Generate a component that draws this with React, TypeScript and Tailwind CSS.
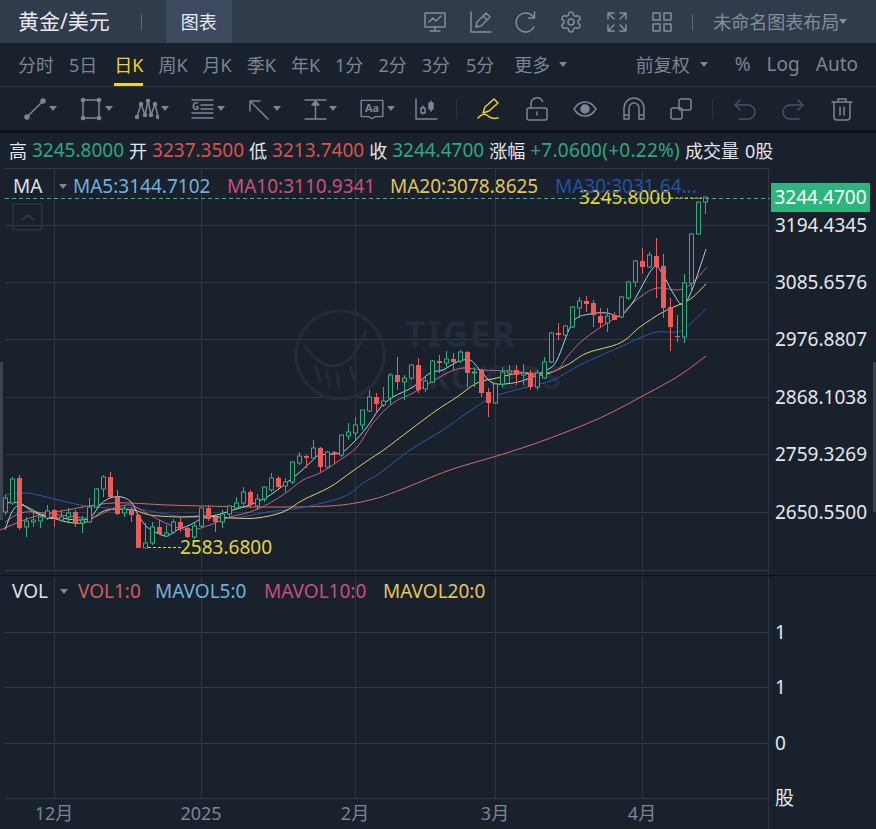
import { Settings } from "lucide-react";
import type { ReactNode } from "react";

// top, bottom, wickTop, wickBottom, direction. one row per day, 7px apart, starts at x=5
type Candle = [number, number, number, number, "u" | "d"];
const candles: Candle[] = [
  [498, 512, 495, 515, "u"], [479, 503, 477, 505, "u"], [478, 528, 475, 530, "d"], [521, 527, 517, 537, "u"],
  [520, 522, 510, 527, "u"], [517, 521, 513, 528, "u"], [511, 518, 505, 520, "u"], [510, 518, 509, 527, "d"],
  [517, 520, 510, 522, "u"], [513, 517, 508, 522, "u"], [512, 523, 510, 527, "d"], [520, 523, 516, 533, "u"],
  [507, 522, 498, 523, "u"], [489, 507, 488, 508, "u"], [477, 489, 475, 497, "u"], [477, 497, 472, 498, "d"],
  [497, 514, 490, 515, "d"], [509, 513, 506, 517, "u"], [509, 515, 507, 522, "d"], [515, 548, 514, 548, "d"],
  [543, 548, 523, 548, "u"], [527, 543, 522, 545, "u"], [527, 534, 520, 535, "d"], [533, 536, 525, 537, "u"],
  [522, 532, 519, 534, "u"], [522, 529, 518, 532, "d"], [528, 537, 527, 538, "d"], [526, 537, 523, 539, "u"],
  [508, 526, 507, 527, "u"], [508, 519, 505, 521, "d"], [517, 522, 514, 532, "d"], [514, 522, 510, 528, "u"],
  [506, 514, 505, 517, "u"], [503, 508, 497, 510, "u"], [492, 503, 487, 507, "u"], [492, 505, 490, 508, "d"],
  [499, 506, 494, 510, "u"], [487, 499, 486, 502, "u"], [478, 490, 473, 492, "u"], [478, 487, 476, 490, "d"],
  [482, 486, 478, 492, "u"], [462, 482, 461, 484, "u"], [456, 463, 452, 465, "u"], [456, 458, 455, 468, "d"],
  [448, 458, 440, 460, "u"], [448, 467, 447, 472, "d"], [452, 467, 451, 467, "u"], [452, 454, 451, 464, "d"],
  [435, 455, 435, 457, "u"], [432, 436, 423, 440, "u"], [425, 433, 417, 440, "u"], [410, 425, 410, 430, "u"],
  [397, 411, 390, 412, "u"], [397, 404, 393, 413, "d"], [401, 405, 387, 407, "u"], [375, 398, 373, 405, "u"],
  [375, 382, 357, 390, "d"], [378, 382, 375, 400, "u"], [365, 378, 364, 380, "u"], [365, 390, 358, 393, "d"],
  [381, 389, 377, 392, "u"], [361, 382, 360, 383, "u"], [361, 363, 355, 373, "d"], [359, 363, 351, 367, "u"],
  [359, 362, 353, 370, "d"], [352, 361, 350, 363, "u"], [352, 373, 351, 387, "d"], [372, 373, 367, 387, "u"],
  [370, 393, 369, 397, "d"], [392, 403, 388, 417, "d"], [384, 403, 383, 404, "u"], [372, 384, 367, 388, "u"],
  [371, 373, 365, 383, "u"], [370, 375, 365, 385, "d"], [373, 375, 364, 385, "u"], [373, 387, 370, 390, "d"],
  [373, 387, 370, 390, "u"], [362, 378, 357, 379, "u"], [333, 362, 332, 363, "u"], [333, 335, 323, 340, "d"],
  [326, 335, 325, 336, "u"], [307, 327, 306, 328, "u"], [301, 308, 297, 318, "u"], [301, 304, 296, 312, "d"],
  [303, 315, 300, 327, "d"], [316, 323, 308, 328, "d"], [316, 323, 308, 332, "u"], [315, 320, 312, 320, "d"],
  [297, 317, 296, 318, "u"], [282, 298, 281, 300, "u"], [261, 282, 260, 287, "u"], [261, 267, 248, 274, "d"],
  [255, 267, 252, 268, "u"], [256, 267, 238, 298, "d"], [266, 308, 254, 318, "d"], [307, 327, 298, 351, "d"],
  [336, 337, 315, 342, "d"], [283, 337, 274, 343, "u"], [234, 283, 233, 290, "u"], [202, 234, 201, 235, "u"],
  [197, 202, 197, 214, "u"],
];

const ma5: number[][] = [[5,530],[12,512],[20,505],[33,510],[47,518],[60,518],[77,520],[90,518],[100,505],[110,498],[122,497],[132,503],[138,515],[147,527],[157,533],[167,536],[177,530],[190,525],[203,518],[217,515],[233,510],[250,505],[267,497],[280,488],[290,480],[300,472],[313,460],[320,455],[340,453],[353,443],[367,427],[380,408],[393,397],[413,387],[430,373],[443,370],[457,362],[470,360],[480,370],[493,383],[513,383],[530,378],[547,370],[557,360],[573,322],[590,314],[607,313],[620,316],[633,302],[653,268],[662,273],[673,293],[683,305],[692,290],[700,267],[706,249]];
const ma10: number[][] = [[5,522],[25,512],[60,515],[90,518],[110,510],[130,505],[150,515],[170,525],[190,530],[210,525],[230,517],[250,512],[270,503],[287,492],[303,480],[320,473],[337,462],[357,447],[373,423],[393,403],[413,393],[430,383],[447,373],[463,368],[483,370],[507,371],[537,373],[557,370],[567,357],[583,340],[607,323],[620,315],[640,297],[657,288],[677,290],[690,285],[707,267]];
const ma20: number[][] = [[5,503],[20,503],[33,512],[50,517],[67,522],[83,523],[93,518],[107,510],[133,510],[150,515],[180,517],[205,516],[233,518],[257,518],[283,512],[303,500],[330,487],[350,473],[367,461],[385,449],[410,430],[437,410],[457,397],[477,383],[497,378],[520,373],[543,375],[567,365],[587,353],[620,343],[640,327],[663,312],[683,303],[693,297],[706,284]];
const ma30: number[][] = [[5,495],[27,493],[50,498],[80,505],[107,508],[133,508],[160,513],[187,517],[233,518],[267,512],[300,508],[343,497],[363,483],[380,473],[410,450],[443,430],[467,413],[493,397],[527,387],[553,380],[580,365],[620,347],[640,338],[657,332],[677,332],[687,327],[706,309]];
const ma60: number[][] = [[0,530],[33,517],[67,510],[113,503],[167,505],[203,506],[260,507],[330,506],[370,500],[400,490],[450,470],[500,455],[545,440],[600,418],[650,392],[680,375],[706,356]];

const FONT = "font-['Noto_Sans','Noto_Sans_CJK_SC',sans-serif]";

function smooth(pts: number[][]) {
  let d = `M${pts[0][0]} ${pts[0][1]}`;
  for (let i = 0; i < pts.length - 1; i++) {
    const p0 = pts[i - 1] || pts[i];
    const p1 = pts[i];
    const p2 = pts[i + 1];
    const p3 = pts[i + 2] || p2;
    const c1x = p1[0] + (p2[0] - p0[0]) / 6;
    const c1y = p1[1] + (p2[1] - p0[1]) / 6;
    const c2x = p2[0] - (p3[0] - p1[0]) / 6;
    const c2y = p2[1] - (p3[1] - p1[1]) / 6;
    d += ` C${c1x} ${c1y} ${c2x} ${c2y} ${p2[0]} ${p2[1]}`;
  }
  return d;
}

function Caret({ className = "border-t-[#7c8592]" }: { className?: string }) {
  return <span className={`inline-block h-0 w-0 border-x-[4px] border-t-[5px] border-x-transparent ${className}`} />;
}

function Icon({ children, size = 24 }: { children: ReactNode; size?: number }) {
  return (
    <svg width={size} height={size} viewBox="0 0 24 24" fill="none" stroke="currentColor" strokeWidth="1.5" strokeLinecap="round" strokeLinejoin="round">
      {children}
    </svg>
  );
}

function ToolBtn({ children }: { children: ReactNode }) {
  return (
    <div className="flex w-14 items-center gap-[2px] text-[#7c8592]">
      {children}
      <Caret />
    </div>
  );
}

function Tab({ label, active, className = "" }: { label: string; active?: boolean; className?: string }) {
  return (
    <div className={`relative flex h-full items-center ${active ? "text-[#f2d428]" : "text-[#7c8592]"} ${className}`}>
      {label}
      {active && <span className="absolute bottom-0 left-0 h-[3px] w-full bg-[#f2d428]" />}
    </div>
  );
}

function Quote({ label, value, color }: { label: string; value: string; color: string }) {
  return (
    <>
      <span className="text-[#e4e7eb]">{label}</span>
      <span className={`text-[19px] ${color}`}>{value}</span>
    </>
  );
}

const gridX = [54, 201, 355, 495, 642];

function MainChart() {
  const mainY = [168.5, 225.5, 282.5, 339.5, 397.5, 454.5, 512.5, 570.5];
  const labels: [string, number][] = [["3194.4345", 225], ["3085.6576", 282], ["2976.8807", 339.5], ["2868.1038", 397], ["2759.3269", 454], ["2650.5500", 512]];
  return (
    <svg className="block" width="876" height="407" viewBox="0 168 876 407">
      {mainY.map((y) => <line key={y} x1="5" x2="769" y1={y} y2={y} stroke="#333b47" />)}
      {gridX.map((x) => <line key={x} x1={x + 0.5} x2={x + 0.5} y1="168" y2="575" stroke="#2d3541" />)}
      <line x1="768.5" x2="768.5" y1="168" y2="575" stroke="#2d3541" />

      <g stroke="#232c38" fill="none">
        <circle cx="340" cy="355" r="44" strokeWidth="3" />
        <path d="M304 345 C325 375 350 375 366 330" strokeWidth="3" />
        <path d="M315 365 l6 18 M326 370 l4 18 M337 372 l2 18 M350 366 l4 14" strokeWidth="3" />
      </g>
      <text x="405" y="347" fontSize="35" fontWeight="700" fill="#232c38" letterSpacing="2">TIGER</text>
      <text x="405" y="389" fontSize="33" fontWeight="700" fill="#232c38" letterSpacing="1">BROKERS</text>

      <path d={smooth(ma60)} fill="none" stroke="#d96a68" strokeWidth="1" />
      <path d={smooth(ma30)} fill="none" stroke="#2b58a8" strokeWidth="1" />
      <path d={smooth(ma20)} fill="none" stroke="#ddd070" strokeWidth="1" />
      <path d={smooth(ma10)} fill="none" stroke="#c25f88" strokeWidth="1" />
      <path d={smooth(ma5)} fill="none" stroke="#9fd6e6" strokeWidth="1" />

      {candles.map(([top, bottom, wt, wb, dir], i) => {
        const cx = 5 + i * 7 + 0.5;
        if (dir === "d") {
          return (
            <g key={i}>
              <line x1={cx} x2={cx} y1={wt} y2={wb} stroke="#ef5b5b" />
              <rect x={cx - 2.5} y={top} width="5" height={bottom - top} fill="#ef5b5b" />
            </g>
          );
        }
        return (
          <g key={i} stroke="#33ad80" fill="none">
            <line x1={cx} x2={cx} y1={wt} y2={top} />
            <line x1={cx} x2={cx} y1={bottom} y2={wb} />
            <rect x={cx - 2} y={top} width="4" height={bottom - top} fill="#19212c" />
          </g>
        );
      })}

      <line x1="5" x2="770" y1="198.5" y2="198.5" stroke="#2fb98a" strokeDasharray="4 3" />
      <line x1="670" x2="702" y1="198" y2="198" stroke="#e3d53b" strokeDasharray="3 2" />
      <text x="579" y="204" fontSize="19" fill="#e3d53b">3245.8000</text>
      <line x1="148" x2="181" y1="547.5" y2="547.5" stroke="#e3d53b" strokeDasharray="3 2" />
      <text x="180" y="554" fontSize="19" fill="#e3d53b">2583.6800</text>

      {labels.map(([t, y]) => (
        <text key={t} x="775" y={y + 6.5} fontSize="19" fill="#e4e7eb">{t}</text>
      ))}
    </svg>
  );
}

function VolChart() {
  const ys = [631.5, 686.5, 742.5, 797.5];
  const ax: [string, number][] = [["1", 631], ["1", 686], ["0", 742], ["股", 797]];
  const months: [string, number][] = [["12月", 54], ["2025", 201], ["2月", 355], ["3月", 495], ["4月", 642]];
  return (
    <svg className="block" width="876" height="254" viewBox="0 575 876 254">
      {ys.map((y) => <line key={y} x1="5" x2="769" y1={y} y2={y} stroke="#333b47" />)}
      {gridX.map((x) => <line key={x} x1={x + 0.5} x2={x + 0.5} y1="576" y2="797" stroke="#2d3541" />)}
      <line x1="768.5" x2="768.5" y1="576" y2="829" stroke="#2d3541" />
      {ax.map(([t, y]) => (
        <text key={y} x="775" y={y + 6.5} fontSize="19" fill="#e4e7eb">{t}</text>
      ))}
      {months.map(([t, x]) => (
        <text key={t} x={x} y="819" fontSize="18" fill="#7c8592" textAnchor="middle">{t}</text>
      ))}
    </svg>
  );
}

export default function App() {
  return (
    <div className={`h-[829px] w-full overflow-hidden bg-[#19212c] text-[18px] leading-none ${FONT}`}>
      <header className="flex h-[43px] items-center bg-[#303b4c] pl-[18px] pr-[26px] text-[#838d9b]">
        <span className="text-[21px] text-[#e8eaee]">黄金/美元</span>
        <span className="ml-[31px] h-[16px] w-px bg-[#5d6777]" />
        <div className="ml-[24px] flex h-full w-[66px] items-center justify-center bg-[#3c495e] text-[#e8eaee]">图表</div>
        <div className="ml-[191px] flex items-center gap-[21.5px]">
          <Icon>
            <path d="M2 3h20v14H2z" />
            <path d="M6 12l4-4 3 3 5-5M12 17v4M7 21h10" />
          </Icon>
          <Icon>
            <path d="M3 2v20h20" />
            <path d="M8 17l1-5 9-9 4 4-9 9zM15 6l4 4" />
          </Icon>
          <Icon>
            <path d="M19.5 7A9.5 9.5 0 1 0 20 17" />
            <path d="M20.5 2v6h-6" />
          </Icon>
          <Settings size={24} strokeWidth={1.5} />
          <Icon>
            <path d="M3 9V3h6M3 3l6 6M15 3h6v6M21 3l-6 6M3 15v6h6M3 21l6-6M21 15v6h-6M21 21l-6-6" />
          </Icon>
          <Icon>
            <path d="M3 3h7v7H3zM14 3h7v7h-7zM3 14h7v7H3zM14 14h7v7h-7z" />
          </Icon>
        </div>
        <span className="ml-[18px] h-[16px] w-px bg-[#5d6777]" />
        <span className="ml-[20px] flex items-center whitespace-nowrap">未命名图表布局<Caret className="border-t-[#838d9b]" /></span>
      </header>

      <div className="flex h-[44px] items-center border-b border-[#2f3843] pl-[18px] pr-[18px]">
        <div className="flex h-full items-center gap-[15px]">
          <Tab label="分时" />
          <Tab label="5日" />
          <Tab label="日K" active className="ml-[2px]" />
          <Tab label="周K" />
          <Tab label="月K" />
          <Tab label="季K" />
          <Tab label="年K" />
          <Tab label="1分" />
          <Tab label="2分" />
          <Tab label="3分" />
          <Tab label="5分" className="ml-[1px]" />
          <span className="ml-[5px] flex items-center gap-[9px] text-[#7c8592]">更多<Caret /></span>
        </div>
        <div className="ml-auto flex items-center text-[19px] text-[#7c8592]">
          <span className="text-[18px]">前复权</span>
          <span className="ml-[10px] flex"><Caret /></span>
          <span className="ml-[27px]">%</span>
          <span className="ml-[16px]">Log</span>
          <span className="ml-[16px]">Auto</span>
        </div>
      </div>

      <div className="flex h-[46px] items-center border-b-[3px] border-[#0e131a] pl-[23px] text-[#7c8592]">
        <ToolBtn>
          <Icon>
            <path d="M4 20L20 4" />
            <circle cx="4" cy="20" r="2" fill="currentColor" />
            <circle cx="20" cy="4" r="2" fill="currentColor" />
          </Icon>
        </ToolBtn>
        <ToolBtn>
          <Icon>
            <path d="M4 3h16v18H4z" />
            <g fill="currentColor">
              <circle cx="4" cy="3" r="1.6" /><circle cx="20" cy="3" r="1.6" /><circle cx="4" cy="21" r="1.6" /><circle cx="20" cy="21" r="1.6" />
            </g>
          </Icon>
        </ToolBtn>
        <ToolBtn>
          <Icon>
            <path d="M2 20L6 7l4 11 3-14 3 14 4-11 3 13" />
            <g fill="currentColor">
              <circle cx="2" cy="20" r="1.5" /><circle cx="6" cy="7" r="1.5" /><circle cx="10" cy="18" r="1.5" /><circle cx="13" cy="4" r="1.5" /><circle cx="16" cy="18" r="1.5" /><circle cx="20" cy="7" r="1.5" /><circle cx="23" cy="20" r="1.5" />
            </g>
          </Icon>
        </ToolBtn>
        <ToolBtn>
          <Icon>
            <path d="M1 3h21M10 8h12M10 12h12M1 16h21M1 21h21" />
            <text x="1" y="13" fontSize="10" fontWeight="700" fill="currentColor" stroke="none">G</text>
          </Icon>
        </ToolBtn>
        <ToolBtn>
          <Icon>
            <path d="M21 22L3 4M3 14V4h10" />
          </Icon>
        </ToolBtn>
        <ToolBtn>
          <Icon>
            <path d="M2 3h21M2 22h21M12.5 8v14" />
            <path d="M9 8l3.5-4 3.5 4z" fill="currentColor" />
          </Icon>
        </ToolBtn>
        <ToolBtn>
          <Icon size={26}>
            <path d="M2 4h20v15h-7l-3 2-3-2H2z" strokeWidth="1.3" />
            <text x="12" y="15" fontSize="10" fontWeight="700" fill="currentColor" stroke="none" textAnchor="middle">Aa</text>
          </Icon>
        </ToolBtn>
        <div className="-ml-[1px] text-[#7c8592]">
          <Icon>
            <path d="M2 2v20h21" />
            <path d="M9 9v8M17 4v10" />
            <rect x="7" y="11" width="4" height="5" fill="#19212c" />
            <rect x="15" y="6" width="4" height="6" fill="currentColor" />
          </Icon>
        </div>
        <span className="ml-[18px] h-[20px] w-px bg-[#2b333e]" />
        <div className="ml-[20px] flex w-[48px] text-[#e9d22a]">
          <Icon>
            <path d="M6 16l2-6L17 2l4 4-9 8z" />
            <path d="M1 21c4-5 8-4 10-2s5 3 10 2" />
          </Icon>
        </div>
        <div className="flex w-[48px]">
          <Icon>
            <rect x="2" y="11" width="20" height="12" rx="2" />
            <path d="M6 11V7a6 6 0 0 1 11.5-2.5M12 15v3" />
          </Icon>
        </div>
        <div className="flex w-[49px]">
          <Icon>
            <path d="M1 12c3-5 7-7 11-7s8 2 11 7c-3 5-7 7-11 7s-8-2-11-7z" />
            <circle cx="12" cy="12" r="4" fill="currentColor" />
          </Icon>
        </div>
        <div className="flex w-[47px]">
          <Icon>
            <path d="M2 22V11a10 10 0 0 1 20 0v11h-5V11a5 5 0 0 0-10 0v11zM2 18h5M17 18h5" />
          </Icon>
        </div>
        <div className="flex w-[43px]">
          <Icon>
            <rect x="10" y="2" width="12" height="11" rx="2" />
            <rect x="2" y="11" width="11" height="11" rx="2" />
          </Icon>
        </div>
        <span className="h-[20px] w-px bg-[#2b333e]" />
        <div className="ml-[20px] flex w-[48px] text-[#485160]">
          <Icon>
            <path d="M7 3L2 8l5 5" />
            <path d="M2 8h13a7 7 0 0 1 0 14H6" />
          </Icon>
        </div>
        <div className="flex w-[49px] text-[#485160]">
          <Icon>
            <path d="M17 3l5 5-5 5" />
            <path d="M22 8H9a7 7 0 0 0 0 14h9" />
          </Icon>
        </div>
        <div className="flex">
          <Icon>
            <path d="M2 5h20M8 5V2h8v3M4 5v15a3 3 0 0 0 3 3h10a3 3 0 0 0 3-3V5M10 10v8M14 10v8" />
          </Icon>
        </div>
      </div>

      <div className="flex h-[35px] items-center gap-[5px] pl-[9px] whitespace-nowrap">
        <Quote label="高" value="3245.8000" color="text-[#2fa87c]" />
        <Quote label="开" value="3237.3500" color="text-[#d9534f]" />
        <Quote label="低" value="3213.7400" color="text-[#d9534f]" />
        <Quote label="收" value="3244.4700" color="text-[#2fa87c]" />
        <Quote label="涨幅" value="+7.0600(+0.22%)" color="text-[#2fa87c] tracking-[0.25px]" />
        <span className="flex gap-[6px] text-[#e4e7eb]"><span>成交量</span><span>0股</span></span>
      </div>

      <div className="relative h-[407px]">
        <MainChart />
        <div className="absolute left-[13px] top-[9px] flex items-center whitespace-nowrap text-[19px]">
          <span className="w-[46px] text-[#dfe3e8]">MA</span>
          <span className="flex w-[14px]"><Caret /></span>
          <span className="w-[154px] text-[#6fb2dd]">MA5:3144.7102</span>
          <span className="w-[163px] text-[#c9507a]">MA10:3110.9341</span>
          <span className="w-[165px] text-[#e3c65a]">MA20:3078.8625</span>
          <span className="text-[#2450a8]">MA30:3031.64...</span>
        </div>
        <div className="absolute left-[12px] top-[35px] flex h-[28px] w-[31px] items-center justify-center rounded-[3px] border-2 border-[#262f3b] text-[#2f3845]">
          <svg width="14" height="8" viewBox="0 0 14 8" fill="none" stroke="currentColor" strokeWidth="2"><path d="M1 7l6-5 6 5" /></svg>
        </div>
        <div className="absolute left-[771px] top-[15px] flex h-[29px] w-[99px] items-center justify-center bg-[#2bb67e] text-[19px] text-white">3244.4700</div>
        <span className="absolute left-0 top-[194px] h-[158px] w-[3px] bg-[#3a4350]" />
        <span className="absolute right-0 top-[194px] h-[150px] w-[3px] bg-[#3a4350]" />
      </div>

      <div className="relative">
        <div className="h-px bg-[#0e131a]" />
        <VolChart />
        <div className="absolute left-[12px] top-[7px] flex items-center whitespace-nowrap text-[19px]">
          <span className="w-[48px] text-[#dfe3e8]">VOL</span>
          <span className="flex w-[18px]"><Caret /></span>
          <span className="w-[77px] text-[#c9605f]">VOL1:0</span>
          <span className="w-[109px] text-[#6fb2dd]">MAVOL5:0</span>
          <span className="w-[119px] text-[#c9507a]">MAVOL10:0</span>
          <span className="text-[#e3c65a]">MAVOL20:0</span>
        </div>
      </div>
    </div>
  );
}
